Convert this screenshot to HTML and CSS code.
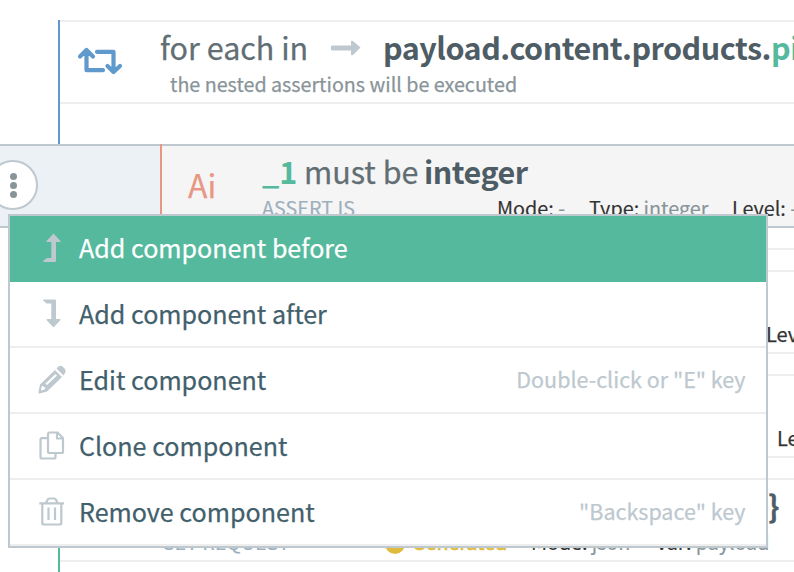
FILE: index.html
```html
<!DOCTYPE html>
<html lang="en">
<head>
<meta charset="utf-8">
<title>Scenario editor</title>
<link rel="stylesheet" href="styles.css">
</head>
<body>
<main class="editor">
  <section class="loop">
    <div class="row loop-row">
      <svg class="loop-icon" width="46" height="30" viewBox="0 0 46 30" fill="none" stroke="#6099cb" stroke-width="4.2" stroke-linecap="round" stroke-linejoin="round"><path d="M3 11.500 9.500 5 16 11.500M9.500 6V25.200H26M20 6.800H36.500V26M30.500 21 36.500 27 43 21"/></svg>
      <div class="body">
        <div class="title"><span class="foreach">for each in</span><svg class="arrow" width="30" height="16" viewBox="0 0 30 16"><path d="M1 5.500H20V1.500Q20 .5 22 1L29.500 7.500 22 15Q20 16 20 14V10.500H1Q0 10.500 0 9.500V6.500Q0 5.500 1 5.500Z" fill="#bdc8cf"/></svg><b class="path">payload.content.products.<i>pictures</i></b></div>
        <div class="note">the nested assertions will be executed</div>
      </div>
    </div>
  </section>
  <section class="selected">
    <div class="gutter"><button class="more" aria-label="Options"><i></i><i></i><i></i></button></div>
    <div class="assert">
      <div class="badge">Ai</div>
      <div class="assert-body">
        <div class="assert-title"><b class="var">_1</b><span class="must">must be</span><b class="int">integer</b></div>
        <div class="meta"><span class="kind">ASSERT IS</span><span class="mode">Mode: <i>-</i></span><span class="type">Type: <i>integer</i></span><span>Level: <i>-</i></span></div>
      </div>
    </div>
  </section>
  <section class="rest">
    <div class="spacer"></div>
    <div class="row side"><span class="level one">Level:</span></div>
    <div class="row side"><span class="level two">Level:</span></div>
    <div class="row request">
      <div class="brace">}</div>
      <div class="meta"><span class="kind get">GET REQUEST</span><span class="generated"><i class="dot"></i>Generated</span><span class="json">Mode: <i>json</i></span><span class="payload">Var: <i>payload</i></span></div>
    </div>
  </section>
</main>
<nav class="menu">
  <div class="item active"><svg viewBox="0 0 30 30"><path d="M16.500 .5 23.500 8Q24 9 22.500 9H19V28Q19 29 18 29H7Q5.500 29 6.200 28L9 25.500Q9.500 25 10.500 25H14.300V9H10.500Q9 9 9.500 8Z" fill="currentColor"/></svg><span>Add component before</span></div>
  <div class="item"><svg viewBox="0 0 30 30"><path d="M16.500 28.500 23.500 21Q24 20 22.500 20H19V1.500Q19 .5 18 .5H7Q5.500 .5 6.200 1.500L9 4Q9.500 4.500 10.500 4.500H14.300V20H10.500Q9 20 9.500 21Z" fill="currentColor"/></svg><span>Add component after</span></div>
  <div class="item"><svg viewBox="0 0 30 30"><path fill="currentColor" fill-rule="evenodd" d="M1.500 27 3 19.500 18 5 25 12 10 26.500 2.500 28.500Q1 28.500 1.500 27ZM4 25.500 7.500 24.500 8.500 22.500 6.500 22 6 20.500 4.500 22ZM8.500 18.500 10 20 20 10.500 18.500 9ZM19.500 3.500 21.500 1.500Q23.500 0 25.500 1.500L28 4Q29.500 6 28 8L26.500 10.500Z"/></svg><span>Edit component</span><span class="key">Double-click or "E" key</span></div>
  <div class="item"><svg viewBox="0 0 30 30" fill="none" stroke="currentColor" stroke-width="2.200" stroke-linejoin="round"><path d="M12.500 1.500H20.500L26 7V20.500Q26 22 24.500 22H12.500Q11 22 11 20.500V3Q11 1.500 12.500 1.500ZM20 1.500V7.500H26M11 7.200H5Q3.500 7.200 3.500 8.700V26Q3.500 27.500 5 27.500H17Q18.500 27.500 18.500 26V22"/></svg><span>Clone component</span></div>
  <div class="item"><svg viewBox="0 0 30 30" fill="none" stroke="currentColor" stroke-width="2.200" stroke-linejoin="round"><path d="M2.300 6.300H27M9 6 10.500 3Q11.200 1.500 12.500 1.500H17Q18.500 1.500 19.200 3L20.500 6M5.300 6.300V26Q5.300 27.500 6.800 27.500H22.800Q24.300 27.500 24.300 26V6.300M11.500 10.500V23M18 10.500V23"/></svg><span>Remove component</span><span class="key">"Backspace" key</span></div>
</nav>
</body>
</html>
```

FILE: styles.css
```css
* { box-sizing: border-box; }
body { margin: 0; width: 794px; height: 572px; overflow: hidden; background: #fff; color: #616e74; font-family: "Noto Sans CJK SC", sans-serif; white-space: nowrap; -webkit-text-stroke: .25px currentColor; }
i { font-style: normal; }
b { font-weight: 700; -webkit-text-stroke: 0; }
.editor { padding-top: 20px; width: 794px; height: 572px; overflow: hidden; }
.loop { margin-left: 58px; height: 124px; border-left: 2px solid #6099cb; }
.row { height: 84px; border-top: 2px solid #eee; border-bottom: 2px solid #eee; }
.loop-row { display: flex; }
.loop-icon { margin: 23px 0 0 17px; flex: none; }
.body { margin-left: 37px; }
.title { display: flex; height: 51px; line-height: 51px; font-size: 30.5px; }
.foreach { width: 171px; }
.arrow { margin-top: 18px; flex: none; }
.path { margin-left: 22px; color: #4e5d65; letter-spacing: -.48px; }
.path i, .var { color: #54b99d; }
.note { margin-left: 10px; line-height: 22px; font-size: 19.7px; color: #899499; }
.selected { display: flex; height: 84px; border: solid #bdc8cf; border-width: 2px 0; }
.gutter { flex: none; width: 160px; background: #ebf1f5; padding-top: 14px; }
.more { display: flex; flex-direction: column; align-items: center; justify-content: center; gap: 2px; width: 50px; height: 50px; margin-left: -12px; padding: 0; background: #fff; border: 2px solid #bdc8cf; border-radius: 50%; }
.more i { width: 7px; height: 7px; border-radius: 50%; background: #899499; }
.assert { display: flex; flex: 1; min-width: 0; margin-top: -2px; padding-top: 2px; border-left: 2px solid #e89784; background: #f5f5f5; background-clip: content-box; }
.badge { flex: none; width: 100px; padding-left: 26px; line-height: 76px; font-size: 32px; color: #e89784; }
.assert-title { display: flex; height: 51px; line-height: 51px; font-size: 30.5px; }
.var { width: 42px; }
.must { width: 120px; }
.int { color: #4e5d65; letter-spacing: -.5px; }
.meta { display: flex; line-height: 22px; font-size: 19.8px; color: #333; -webkit-text-stroke: .15px currentColor; }
.meta i { color: #899499; }
.kind { width: 235px; color: #9dafbd; }
.mode { width: 92px; }
.type { width: 143px; }
.rest { margin-left: 58px; border-left: 2px solid #54b99d; height: 400px; }
.spacer { height: 22px; border-bottom: 2px solid #eee; margin-bottom: 20px; }
.side { margin-bottom: 20px; padding-top: 49px; line-height: 26px; font-size: 20px; color: #333; }
.one { margin-left: 706px; }
.two { margin-left: 717px; }
.brace { margin-left: 708px; height: 51px; line-height: 51px; font-size: 30.5px; font-weight: 700; color: #4e5d65; }
.request .meta { margin-left: 101px; letter-spacing: -.08px; }
.get { width: 224px; }
.meta .generated { width: 146px; color: #e0ba3b; -webkit-text-stroke: .6px currentColor; }
.meta .dot { display: inline-block; width: 20px; height: 20px; margin-right: 7px; border-radius: 50%; background: #e0ba3b; vertical-align: -4px; }
.json { width: 125px; }
.menu { position: absolute; left: 8px; top: 214px; width: 760px; height: 334px; border: 2px solid #bdc8cf; background: #fff; color: #42606c; }
.item { display: flex; align-items: center; height: 66px; padding: 0 20.500px 0 27px; border-bottom: 2px solid #eee; font-size: 25.08px; }
.item span { padding-bottom: 2px; }
.item svg { width: 30px; height: 30px; margin-right: 12px; color: #bdc8cf; flex: none; }
.active { background: #54b99d; border-color: #54b99d; color: #fff; }
.item .key { margin-left: auto; padding-bottom: 4px; font-size: 21.5px; color: #bdc8cf; }
```
